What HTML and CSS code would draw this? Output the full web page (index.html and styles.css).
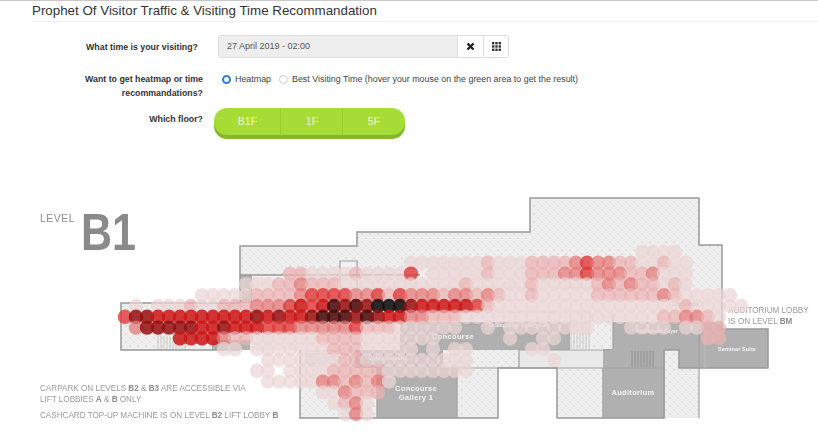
FILE: index.html
```html
<!DOCTYPE html>
<html>
  <head>
    <meta charset="UTF-8">
    <title>Prophet Of Visitor Traffic</title>
    <link rel="stylesheet" href="styles.css">
  </head>
  <body>
    <h1 class="title">Prophet Of Visitor Traffic &amp; Visiting Time Recommandation</h1>
    <form class="config">
      <div class="field field-time">
        <label class="field-label">What time is your visiting?</label>
        <div class="date-group">
          <span class="date-value">27 April 2019 - 02:00</span>
          <span class="date-btn date-btn-clear">
            <svg width="9" height="9" viewBox="0 0 9 9"><path d="M1.5 1.5 L7.5 7.5 M7.5 1.5 L1.5 7.5" stroke="#222" stroke-width="2.4"/></svg>
          </span>
          <span class="date-btn date-btn-cal">
            <svg width="9" height="9" viewBox="0 0 9 9" fill="#333">
              <rect x="0" y="0" width="2.4" height="2.4"/><rect x="3.3" y="0" width="2.4" height="2.4"/><rect x="6.6" y="0" width="2.4" height="2.4"/>
              <rect x="0" y="3.3" width="2.4" height="2.4"/><rect x="3.3" y="3.3" width="2.4" height="2.4"/><rect x="6.6" y="3.3" width="2.4" height="2.4"/>
              <rect x="0" y="6.6" width="2.4" height="2.4"/><rect x="3.3" y="6.6" width="2.4" height="2.4"/><rect x="6.6" y="6.6" width="2.4" height="2.4"/>
            </svg>
          </span>
        </div>
      </div>
      <div class="field field-mode">
        <label class="field-label">Want to get heatmap or time recommandations?</label>
        <div class="radios">
          <span class="radio radio-on"></span><span class="radio-text">Heatmap</span>
          <span class="radio"></span><span class="radio-text">Best Visiting Time (hover your mouse on the green area to get the result)</span>
        </div>
      </div>
      <div class="field field-floor">
        <label class="field-label">Which floor?</label>
        <div class="floors">
          <span class="floor floor-first">B1F</span>
          <span class="floor">1F</span>
          <span class="floor">5F</span>
        </div>
      </div>
    </form>

    <svg class="map" id="map" width="818" height="257" viewBox="0 190 818 257">
      <defs>
        <pattern id="dots" width="8" height="8" patternUnits="userSpaceOnUse">
          <rect width="8" height="8" fill="#eeeeee"/>
          <circle cx="2" cy="2" r="0.6" fill="#b4b4b4"/>
          <circle cx="6" cy="6" r="0.6" fill="#b4b4b4"/>
        </pattern>
      </defs>

      <!-- side notes -->
      <text class="level-word" x="40" y="222">LEVEL</text>
      <text class="level-num" x="81" y="250" textLength="55" lengthAdjust="spacingAndGlyphs">B1</text>
      <text class="note" x="40" y="391">CARPARK ON LEVELS <tspan class="b">B2</tspan> &amp; <tspan class="b">B3</tspan> ARE ACCESSIBLE VIA</text>
      <text class="note" x="40" y="402">LIFT LOBBIES <tspan class="b">A</tspan> &amp; <tspan class="b">B</tspan> ONLY</text>
      <text class="note" x="40" y="418">CASHCARD TOP-UP MACHINE IS ON LEVEL <tspan class="b">B2</tspan> LIFT LOBBY <tspan class="b">B</tspan></text>
      <text class="note" x="728" y="313">AUDITORIUM LOBBY</text>
      <text class="note" x="728" y="324">IS ON LEVEL <tspan class="b">BM</tspan></text>

      <!-- floor plan -->
      <path class="dotted" d="M240 246 H357 V232 H530 V198 H699 V245 H722 V329 H240 Z"/>
      <path class="plain" d="M240 288 H722 V322 H240 Z"/>
      <path class="plain" d="M240 322 H400 V350 H240 Z"/>
      <path class="gray" d="M240 275 H252 V303 H240 Z"/>
      <path class="dotted" d="M121 303 H240 V350 H121 Z"/>
      <path class="gray" d="M212 340 H250 V350 H212 Z"/>
      <path class="gray" d="M400 322 H570 V350 H400 Z"/>
      <path class="gray" d="M613 322 H722 V329 H768 V368 H679 V350 H613 Z"/>
      <path class="dotted" d="M570 313 H613 V349 H570 Z"/>
      <path class="gray" d="M603 349 H664 V418 H603 Z"/>
      <path class="gray" d="M355 350 H443 V368 H355 Z"/>
      <path class="gray" d="M377 368 H457 V418 H377 Z"/>
      <path class="dotted" d="M300 350 H355 V368 H377 V418 H300 Z"/>
      <path class="dotted" d="M443 350 H519 V368 H498 V418 H457 V368 H443 Z"/>
      <path class="strip" d="M519 350 H603 V368 H519 Z"/>
      <path class="dotted" d="M557 368 H603 V418 H557 Z"/>
      <path class="dotted" d="M664 350 H679 V368 H699 V418 H664 Z"/>
      <path class="plain" d="M340 261 H357 V288 H340 Z"/>

      <path class="outline" d="M240 303 V246 H357 V232 H530 V198 H699 V245 H722 V329 H768 V368 H679 V350 H664 V418 H557 V368 H498 V418 H457 M457 418 H300 V350 M240 350 H121 V303 H240 M240 275 H420"/>
      <path class="wall" d="M340 288 V261 H357 V288 M377 368 V418 M457 368 V418 M519 350 V368 M443 368 H603 M603 368 V418 M664 350 V418 M604 368 H663 M699 329 V418 M519 350 H603 M613 313 V349 M613 350 H570"/>
      <path class="thin" d="M340 288 H533 V300 H340 M555 288 H664 V300 H555 M500 312 H590 V322 H500 M705 329 V368"/>

      <!-- stairs -->
      <path class="stairs" d="M158 335 V349 M161 335 V349 M164 336 V349 M167 336 V349 M170 337 V349 M173 337 V349 M176 337 V349 M179 338 V349 M182 338 V349 M185 339 V349"/>
      <path class="stairs" d="M305 351 H338 M305 354 H338 M305 357 H338 M305 360 H338 M305 363 H338"/>
      <path class="stairs" d="M571 323 V349 M574 323 V349 M577 323 V349 M580 323 V349 M583 323 V349 M586 323 V349 M589 323 V349"/>
      <path class="stairs dark" d="M632 351 V367 M635 351 V367 M638 351 V367 M641 351 V367 M644 351 V367 M647 351 V367 M650 351 V367 M653 351 V367"/>

      <!-- room names -->
      <text class="room" x="453" y="339">Concourse</text>
      <text class="room" x="416" y="391">Concourse</text>
      <text class="room" x="416" y="399.500">Gallery 1</text>
      <text class="room" x="633" y="395">Auditorium</text>
      <text class="room room-sm" x="737" y="351">Seminar Suite</text>
      <text class="room room-xs" x="518" y="327">To Singapore Gallery Hall</text>
      <text class="room room-xs" x="657" y="333">Auditorium Foyer</text>
      <text class="room room-sm" x="388" y="360">Video Screens</text>
      <text class="room room-dim" x="688" y="306">Lift Lobby 3</text>

      <g id="heat"></g>
    </svg>
    <script src="heatmap.js"></script>
  </body>
</html>
```

FILE: styles.css
```css
html, body {
  margin: 0;
  height: 100%;
  overflow: hidden;
}
body {
  background: #fff;
  color: #333;
  font-family: "Liberation Sans", Arial, sans-serif;
  border-top: 1px solid #c8c8c8;
  box-sizing: border-box;
}

.title {
  margin: 0 0 0 32px;
  height: 20px;
  border-bottom: 1px solid #eee;
  font-size: 13.35px;
  font-weight: normal;
  line-height: 19px;
  color: #333;
}

.config {
  margin-top: 13px;
}
.field {
  display: flex;
}
.field-label {
  width: 171px;
  margin-left: 32px;
  font-size: 8.8px;
  font-weight: bold;
  line-height: 14px;
  text-align: right;
  color: #333;
}

.field-time {
  height: 23px;
  align-items: center;
}
.field-time .field-label {
  width: 166px;
  margin-right: 5px;
}
.date-group {
  display: flex;
  height: 23px;
  margin-left: 15px;
  box-sizing: border-box;
  border: 1px solid #ddd;
  border-radius: 3px;
  overflow: hidden;
}
.date-value {
  width: 230px;
  padding-left: 8px;
  background: #eee;
  font-size: 9px;
  line-height: 21px;
  color: #555;
}
.date-btn {
  display: flex;
  align-items: center;
  justify-content: center;
  border-left: 1px solid #ddd;
  background: #fff;
}
.date-btn-clear { width: 25px; }
.date-btn-cal { width: 24px; }

.field-mode {
  margin-top: 14px;
}
.radios {
  display: flex;
  align-items: center;
  height: 14px;
  margin-left: 19px;
  font-size: 8.9px;
  color: #444;
}
.radio {
  width: 9px;
  height: 9px;
  box-sizing: border-box;
  border: 1px solid #ccc;
  border-radius: 50%;
  background: #fff;
}
.radio-on {
  border: 2.5px solid #2b7de0;
}
.radio-text {
  margin-left: 4px;
  margin-right: 8px;
}

.field-floor {
  margin-top: 8px;
}
.field-floor .field-label {
  line-height: 22px;
}
.floors {
  display: flex;
  width: 191px;
  height: 27px;
  margin-left: 11px;
  border-radius: 13px;
  background: #a5dd36;
  box-shadow: 0 4px 0 #86b72b;
  overflow: hidden;
}
.floor {
  width: 62px;
  font-size: 10.5px;
  line-height: 27px;
  text-align: center;
  color: #eef8d0;
  box-shadow: inset -1px 0 0 #97cf30;
}
.floor-first {
  width: 67px;
}
.floor:last-child {
  box-shadow: none;
}

.map {
  position: absolute;
  left: 0;
  top: 190px;
  filter: blur(0.35px);
}
.map text {
  font-family: "Liberation Sans", Arial, sans-serif;
}
.level-word {
  font-size: 10.5px;
  letter-spacing: 0.5px;
  fill: #8f8f8f;
}
.level-num {
  font-size: 52px;
  font-weight: bold;
  fill: #8a8a8a;
}
.note {
  font-size: 8.15px;
  fill: #9a9a9a;
}
.note .b {
  font-weight: bold;
  fill: #8c8c8c;
}

.dotted { fill: url(#dots); }
.plain { fill: #f0f0f0; }
.gray { fill: #b0b0b0; }
.strip { fill: #e9e9e9; }
.outline {
  fill: none;
  stroke: #999;
  stroke-width: 1.5;
}
.wall {
  fill: none;
  stroke: #a0a0a0;
  stroke-width: 1.2;
}
.thin {
  fill: none;
  stroke: #c4c4c4;
  stroke-width: 0.7;
}
.stairs {
  fill: none;
  stroke: #bdbdbd;
  stroke-width: 0.8;
}
.stairs.dark {
  stroke: #8c8c8c;
}
.room {
  font-size: 7.5px;
  font-weight: bold;
  letter-spacing: 0.3px;
  text-anchor: middle;
  fill: #f4f4f4;
}
.room-sm { font-size: 5.5px; letter-spacing: 0.1px; }
.room-xs { font-size: 5px; letter-spacing: 0; }
.room-dim { font-size: 5.5px; fill: #aaa; letter-spacing: 0; }
```

FILE: heatmap.js
```js
// one entry per row of the grid: [first column, intensity of each cell]
var rows = [
  [47, "1111"],
  [26, "11111112111222234332211211"],
  [15, "2211112111140111112111222334333223111"],
  [11, "11122322211111111111211111211111232322121"],
  [7, "1111122223444433424333233232112111112222223211111"],
  [1, "101112112223334545767688865555542" + "11111111111111111" + "211111"],
  [0, "4665555555556565567776765533222" + "111111111111111111" + "223321"],
  [1, "366666556555444333334222111111" + "0010" + "11111111" + "000" + "1111" + "0" + "11" + "22"],
  [5, "555532211111122221111111" + "000000" + "1001100000000000" + "0022"],
  [9, "1101111111222111110101100000" + "11"],
  [13, "1111111221111111111" + "00000001"],
  [12, "1101111222221111111" + "1"],
  [13, "11111332323" + "1"],
  [18, "113222"],
  [19, "1231"],
  [20, "131"]
];

// colour by intensity, 0 stays empty
var fills = [
  null,
  "rgba(236,214,214,0.72)",
  "rgba(236,178,178,0.72)",
  "rgba(230,120,120,0.74)",
  "rgba(222,55,55,0.8)",
  "rgba(205,20,20,0.85)",
  "rgba(150,15,15,0.86)",
  "rgba(75,10,10,0.88)",
  "rgba(25,22,22,0.92)"
];

var heat = document.getElementById("heat");
rows.forEach(function (row, r) {
  var cells = row[1];
  for (var i = 0; i < cells.length; i++) {
    var level = +cells[i];
    if (!level) continue;
    var c = document.createElementNS("http://www.w3.org/2000/svg", "circle");
    c.setAttribute("cx", 125 + 11 * (row[0] + i));
    c.setAttribute("cy", 252 + 10.8 * r);
    c.setAttribute("r", 7.2);
    c.setAttribute("fill", fills[level]);
    heat.appendChild(c);
  }
});
```
